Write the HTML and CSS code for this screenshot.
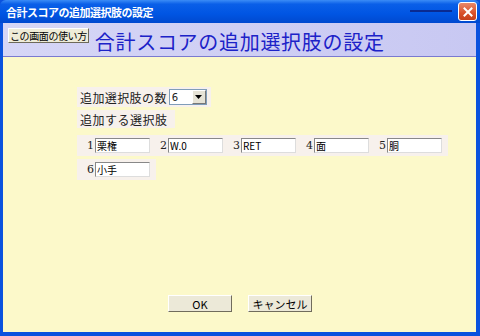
FILE: index.html
```html
<!DOCTYPE html>
<html lang="ja">
<head>
    <meta charset="UTF-8">
    <title>合計スコアの追加選択肢の設定</title>
    <link rel="stylesheet" href="styles.css">
</head>
<body>
    <div class="window">
        <div class="titlebar">
            <span class="title-text">合計スコアの追加選択肢の設定</span>
            <span class="title-line"></span>
            <button class="close-btn">
                <svg width="10" height="10" viewBox="0 0 10 10"><path d="M1.5 1.5 L8.5 8.5 M8.5 1.5 L1.5 8.5" stroke="#fff" stroke-width="2" stroke-linecap="square"/></svg>
            </button>
        </div>
        <div class="frame">
            <div class="header">
                <button class="help-btn">この画面の使い方</button>
                <h1 class="page-title">合計スコアの追加選択肢の設定</h1>
            </div>
            <div class="content">
                <div class="box count-box">
                    <span>追加選択肢の数</span>
                    <span class="select">
                        <span class="select-val">6</span>
                        <span class="select-arrow">
                            <svg width="7" height="4" viewBox="0 0 7 4"><path d="M0 0 H7 L3.5 4 Z" fill="#000"/></svg>
                        </span>
                    </span>
                </div>
                <div class="box label-box">追加する選択肢</div>
                <div class="box choice-box">
                    <label class="choice"><span class="num">1</span><span class="field">栗権</span></label>
                    <label class="choice"><span class="num">2</span><span class="field">W.0</span></label>
                    <label class="choice"><span class="num">3</span><span class="field">RET</span></label>
                    <label class="choice"><span class="num">4</span><span class="field">面</span></label>
                    <label class="choice"><span class="num">5</span><span class="field">胴</span></label>
                </div>
                <div class="box choice-box">
                    <label class="choice"><span class="num">6</span><span class="field">小手</span></label>
                </div>
                <div class="actions">
                    <button class="btn">OK</button>
                    <button class="btn">キャンセル</button>
                </div>
            </div>
        </div>
    </div>
</body>
</html>
```

FILE: styles.css
```css
*{
    box-sizing: border-box;
}
body{
    margin: 0;
    font-family: "Noto Sans CJK JP", "DejaVu Sans", sans-serif;
    font-size: 11px;
    color: #222;
}
button{
    font-family: inherit;
}
.window{
    width: 480px;
    height: 336px;
    display: flex;
    flex-direction: column;
    background: #0a52de;
}
.titlebar{
    height: 23px;
    display: flex;
    align-items: center;
    padding: 0 3px 0 6px;
    background: linear-gradient(#3b8cf6 0%, #0a5fe8 18%, #0055e3 60%, #0049cf 100%);
    border-radius: 6px 6px 0 0;
}
.title-text{
    color: #fff;
    font-weight: bold;
    font-size: 11px;
    letter-spacing: -0.5px;
    flex: 1;
}
.title-line{
    width: 42px;
    height: 2px;
    background: #0a2a90;
    margin-right: 6px;
    margin-bottom: 2px;
}
.close-btn{
    width: 19px;
    height: 19px;
    border: 1px solid #fff;
    border-radius: 3px;
    background: linear-gradient(#e8896a, #d8502a 60%, #c4401c);
    padding: 0;
    display: flex;
    align-items: center;
    justify-content: center;
}
.frame{
    flex: 1;
    margin: 0 4px 4px 3px;
    background: #fcf9ca;
    display: flex;
    flex-direction: column;
}
.header{
    height: 34px;
    display: flex;
    align-items: center;
    gap: 6px;
    padding-left: 5px;
    background: linear-gradient(90deg, #d6d6f6, #c8c8f2);
    border-bottom: 1px solid #7a7ad0;
}
.help-btn{
    font-size: 10px;
    padding: 0 1px;
    height: 15px;
    line-height: 13px;
    margin-top: -8px;
    background: #efecd8;
    border: 1px solid #8a8670;
    border-color: #fff #6d6a5a #6d6a5a #fff;
    color: #000;
    letter-spacing: -0.4px;
}
.page-title{
    margin: 0;
    font-size: 20px;
    font-weight: normal;
    color: #1c22c8;
    letter-spacing: 0.7px;
    padding-top: 3px;
}
.content{
    flex: 1;
    display: flex;
    flex-direction: column;
    align-items: flex-start;
    padding: 30px 0 0 74px;
    gap: 3px;
}
.box{
    background: #f7f1ec;
    display: flex;
    align-items: center;
    font-size: 12px;
}
.count-box{
    height: 20px;
    padding: 0 4px 0 3px;
    gap: 2px;
    letter-spacing: 0.4px;
}
.select{
    width: 38px;
    height: 16px;
    background: #fff;
    border: 1px solid #7f9db9;
    display: flex;
    align-items: center;
    justify-content: space-between;
    padding-left: 2px;
}
.select-val{
    font-size: 10px;
    font-family: "DejaVu Sans", sans-serif;
}
.select-arrow{
    width: 14px;
    height: 14px;
    background: #e6e3d6;
    border: 1px solid;
    border-color: #fff #777 #777 #fff;
    display: flex;
    align-items: center;
    justify-content: center;
}
.label-box{
    height: 18px;
    padding: 0 7px 0 3px;
    letter-spacing: 0.5px;
}
.choice-box{
    height: 21px;
    margin-top: 4px;
    padding: 0 6px 0 10px;
    gap: 10px;
}
.choice-box + .choice-box{
    margin-top: 0;
}
.choice{
    display: flex;
    align-items: center;
    gap: 1px;
}
.num{
    font-family: "DejaVu Serif", serif;
    font-size: 11px;
}
.field{
    width: 55px;
    height: 15px;
    background: #fff;
    border: 1px solid;
    border-color: #888 #ddd #ddd #888;
    font-size: 10px;
    line-height: 13px;
    padding-left: 1px;
    color: #000;
}
.actions{
    display: flex;
    gap: 16px;
    margin-top: auto;
    margin-bottom: 20px;
    margin-left: 91px;
}
.btn{
    width: 64px;
    height: 17px;
    font-size: 11px;
    padding: 0;
    background: #ece9d8;
    border: 1px solid;
    border-color: #fff #706c5c #706c5c #fff;
    color: #000;
}
```
